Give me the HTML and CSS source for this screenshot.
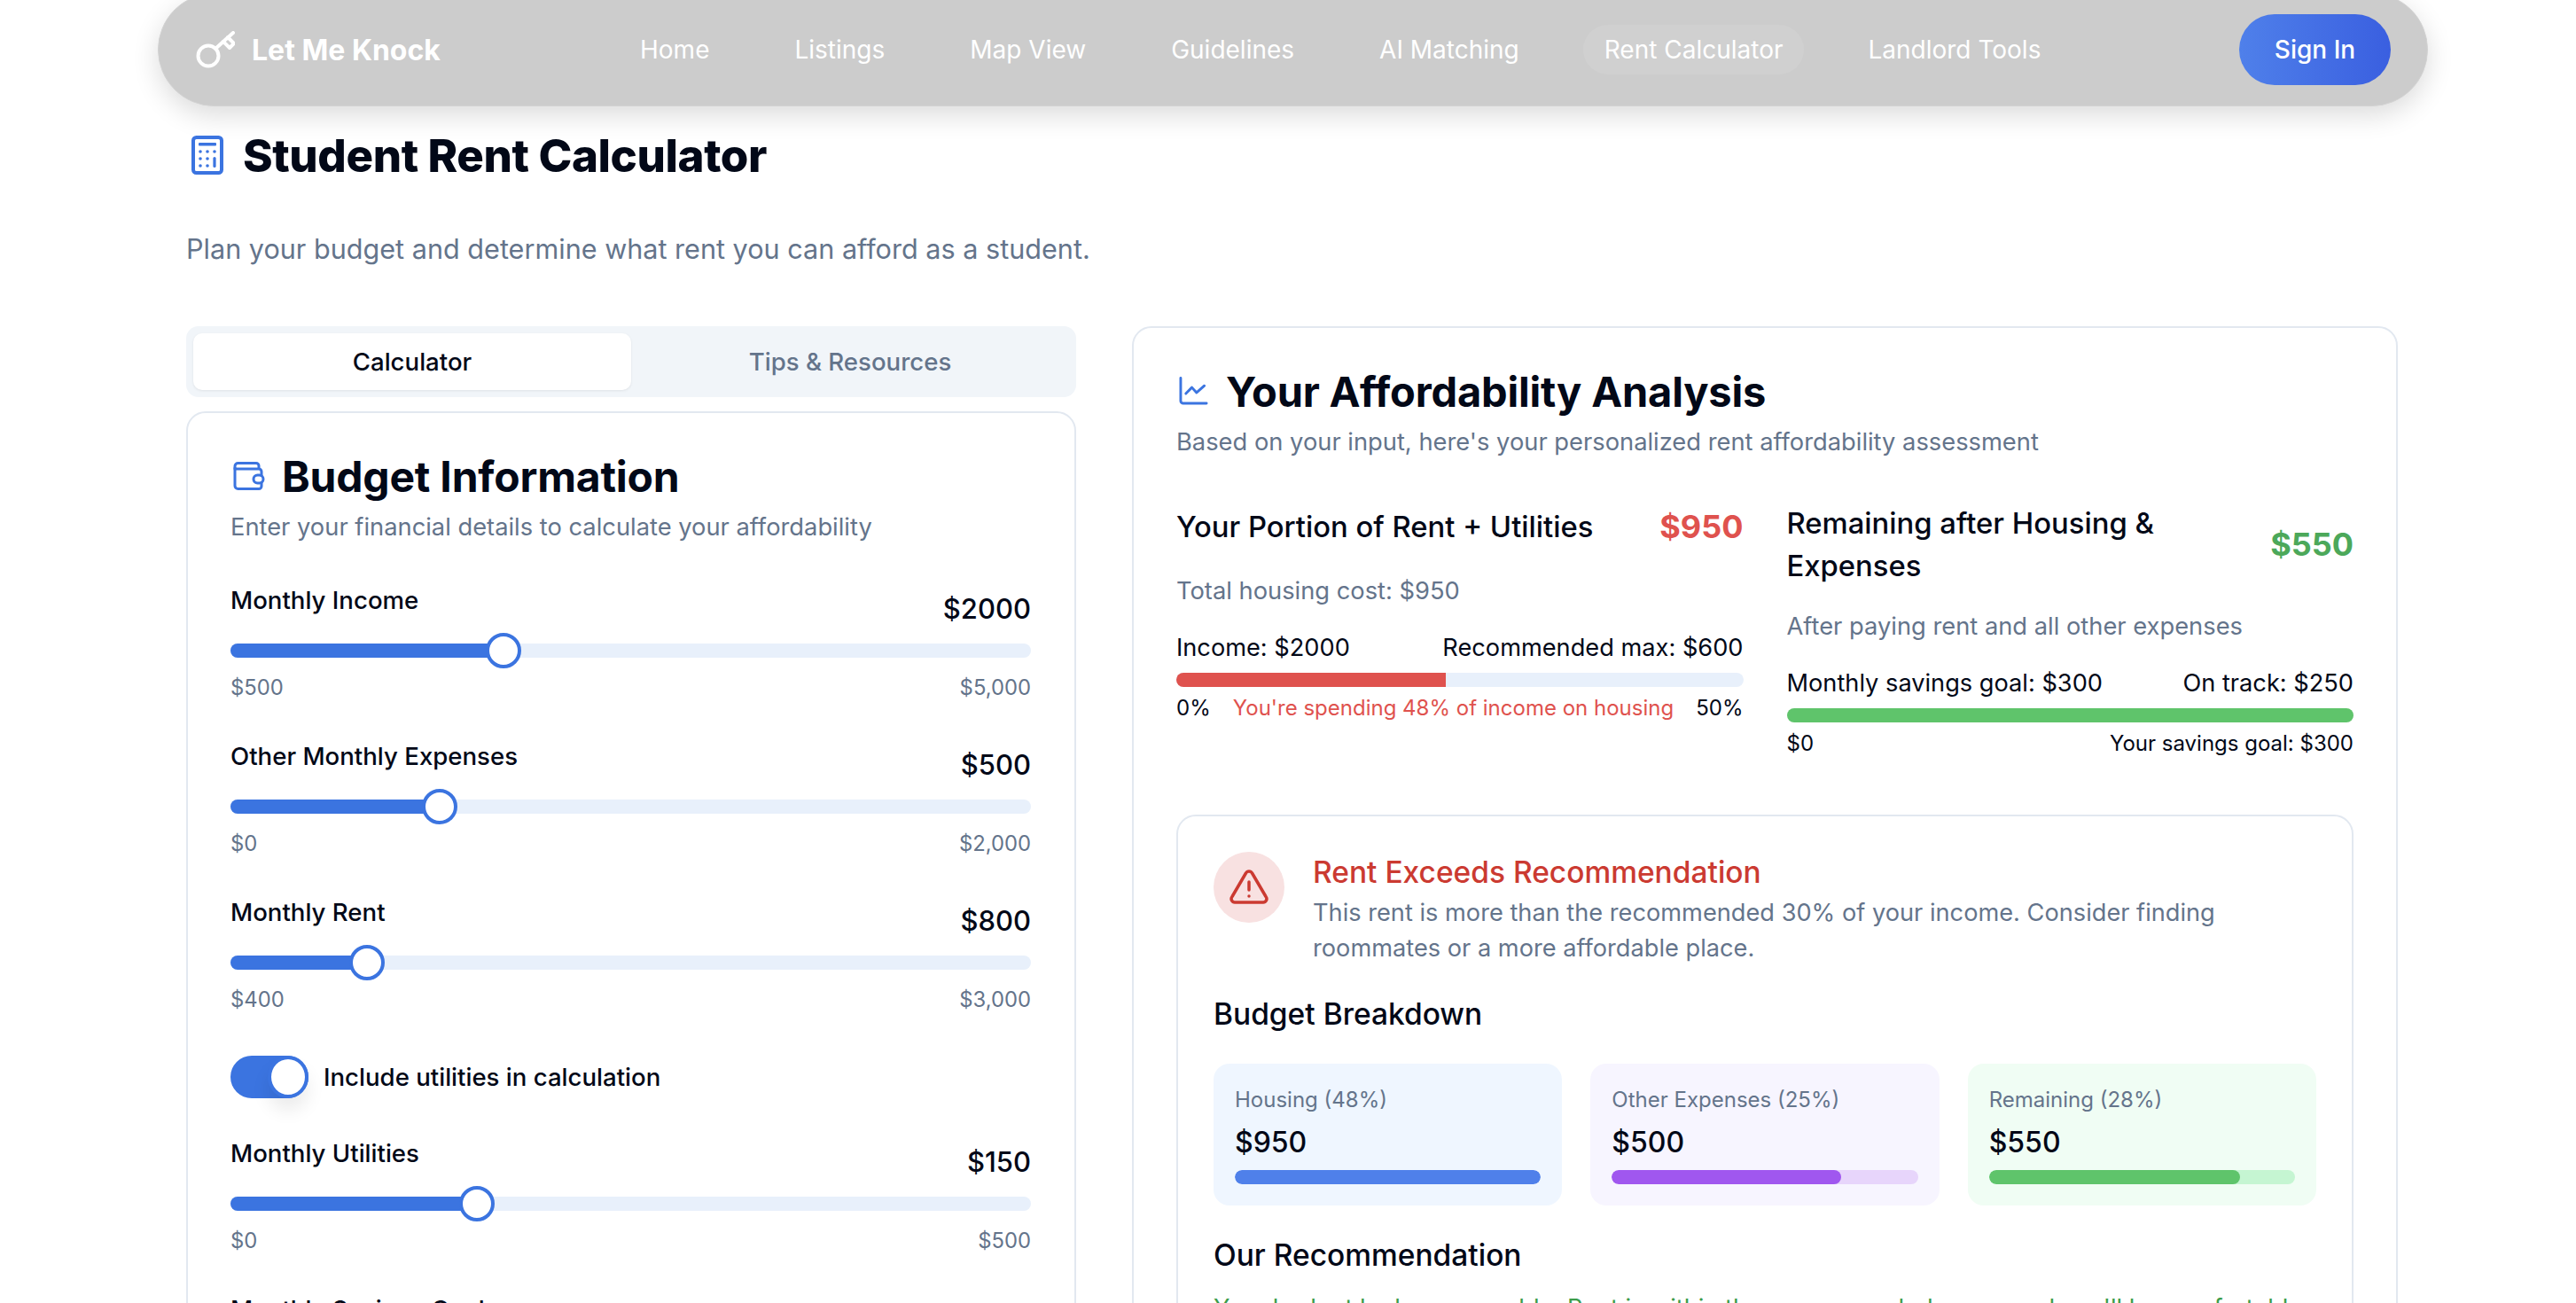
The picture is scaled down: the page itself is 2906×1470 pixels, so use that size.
FILE: index.html
```html
<!DOCTYPE html>
<html lang="en">
<head>
  <meta charset="UTF-8" />
  <title>Student Rent Calculator - Let Me Knock</title>
  <link rel="stylesheet" href="styles.css">
</head>
<body>
  <nav class="navbar">
    <div class="brand">
      <svg class="brand-icon" viewBox="0 0 44 42" fill="none" stroke="#fff" stroke-width="4" stroke-linecap="round" stroke-linejoin="round">
        <circle cx="14" cy="28" r="11.5" />
        <path d="M22 20 L42 2" />
        <path d="M31 12 L38 19 L43 14 L36 7" />
      </svg>
      <span>Let Me Knock</span>
    </div>
    <div class="nav-links">
      <a>Home</a>
      <a>Listings</a>
      <a>Map View</a>
      <a>Guidelines</a>
      <a>AI Matching</a>
      <a class="active">Rent Calculator</a>
      <a>Landlord Tools</a>
    </div>
    <button class="sign-in">Sign In</button>
  </nav>

  <main class="page">
    <h1 class="page-title">
      <svg class="title-icon" viewBox="0 0 36 44" fill="none">
        <rect x="2" y="2" width="32" height="40" rx="3.5" stroke="#3b74e0" stroke-width="4" />
        <rect x="8" y="8" width="20" height="3.5" rx="1" fill="#3b74e0" />
        <g fill="#3b74e0">
          <circle cx="10" cy="18" r="1.8" /><circle cx="18" cy="18" r="1.8" /><circle cx="26" cy="18" r="1.8" />
          <circle cx="10" cy="26" r="1.8" /><circle cx="18" cy="26" r="1.8" />
          <circle cx="10" cy="34" r="1.8" /><circle cx="18" cy="34" r="1.8" />
          <rect x="24.4" y="24" width="3.2" height="12" rx="1.6" />
        </g>
      </svg>
      Student Rent Calculator
    </h1>
    <p class="page-sub">Plan your budget and determine what rent you can afford as a student.</p>

    <div class="columns">
      <section class="left-col">
        <div class="tabs">
          <div class="tab active">Calculator</div>
          <div class="tab">Tips &amp; Resources</div>
        </div>

        <div class="card budget-card">
          <h2 class="card-title">
            <svg class="wallet-icon" viewBox="0 0 36 34" fill="none" stroke="#3b74e0" stroke-width="3" stroke-linejoin="round" stroke-linecap="round">
              <path d="M2 8 V28 A3.5 3.5 0 0 0 5.5 31.5 H29 A3 3 0 0 0 32 28.5 V25" />
              <path d="M32 16 V12 A3 3 0 0 0 29 9 H2 V6 A3.5 3.5 0 0 1 5.5 2.5 H26 A3 3 0 0 1 29 5.5 V9" />
              <rect x="23" y="16" width="11" height="9" rx="4.5" />
            </svg>
            Budget Information
          </h2>
          <p class="card-sub">Enter your financial details to calculate your affordability</p>

          <div class="field">
            <div class="field-head"><label>Monthly Income</label><span class="field-value">$2000</span></div>
            <div class="slider"><div class="slider-fill" style="width: 34.1%"></div><div class="slider-thumb"></div></div>
            <div class="field-range"><span>$500</span><span>$5,000</span></div>
          </div>

          <div class="field">
            <div class="field-head"><label>Other Monthly Expenses</label><span class="field-value">$500</span></div>
            <div class="slider"><div class="slider-fill" style="width: 26.1%"></div><div class="slider-thumb"></div></div>
            <div class="field-range"><span>$0</span><span>$2,000</span></div>
          </div>

          <div class="field">
            <div class="field-head"><label>Monthly Rent</label><span class="field-value">$800</span></div>
            <div class="slider"><div class="slider-fill" style="width: 17%"></div><div class="slider-thumb"></div></div>
            <div class="field-range"><span>$400</span><span>$3,000</span></div>
          </div>

          <div class="toggle-row">
            <div class="toggle"><div class="toggle-thumb"></div></div>
            <span>Include utilities in calculation</span>
          </div>

          <div class="field">
            <div class="field-head"><label>Monthly Utilities</label><span class="field-value">$150</span></div>
            <div class="slider"><div class="slider-fill" style="width: 30.8%"></div><div class="slider-thumb"></div></div>
            <div class="field-range"><span>$0</span><span>$500</span></div>
          </div>

          <div class="field">
            <div class="field-head"><label>Monthly Savings Goal</label><span class="field-value">$300</span></div>
          </div>
        </div>
      </section>

      <section class="card analysis-card">
        <h2 class="card-title">
          <svg class="chart-icon" viewBox="0 0 34 34" fill="none" stroke="#3b74e0" stroke-width="3" stroke-linecap="round" stroke-linejoin="round">
            <path d="M2 2 V28.5 A3 3 0 0 0 5 31.5 H32" />
            <path d="M8 20 L15 13 L20.5 19 L29.5 11" />
          </svg>
          Your Affordability Analysis
        </h2>
        <p class="card-sub">Based on your input, here's your personalized rent affordability assessment</p>

        <div class="stats">
          <div class="stat">
            <div class="stat-head">
              <h3>Your Portion of Rent + Utilities</h3>
              <span class="amount red">$950</span>
            </div>
            <p class="stat-note">Total housing cost: $950</p>
            <div class="bar-labels"><span>Income: $2000</span><span>Recommended max: $600</span></div>
            <div class="bar"><div class="bar-fill red-fill" style="width: 47.5%"></div></div>
            <div class="bar-foot"><span>0%</span><span class="warn">You're spending 48% of income on housing</span><span>50%</span></div>
          </div>

          <div class="stat">
            <div class="stat-head">
              <h3>Remaining after Housing &amp; Expenses</h3>
              <span class="amount green">$550</span>
            </div>
            <p class="stat-note">After paying rent and all other expenses</p>
            <div class="bar-labels"><span>Monthly savings goal: $300</span><span>On track: $250</span></div>
            <div class="bar"><div class="bar-fill green-fill" style="width: 100%"></div></div>
            <div class="bar-foot"><span>$0</span><span>Your savings goal: $300</span></div>
          </div>
        </div>

        <div class="card result-card">
          <div class="alert">
            <div class="alert-icon">
              <svg viewBox="0 0 44 40" fill="none" stroke="#cb3a31" stroke-width="3.5" stroke-linecap="round" stroke-linejoin="round">
                <path d="M18.5 4 A4 4 0 0 1 25.5 4 L41 30.5 A4 4 0 0 1 37.5 37 H6.5 A4 4 0 0 1 3 30.5 Z" />
                <path d="M22 14 V23" />
                <path d="M22 30 V30.1" />
              </svg>
            </div>
            <div class="alert-body">
              <h4>Rent Exceeds Recommendation</h4>
              <p>This rent is more than the recommended 30% of your income. Consider finding roommates or a more affordable place.</p>
            </div>
          </div>

          <h3 class="section-title">Budget Breakdown</h3>
          <div class="breakdown">
            <div class="tile tile-blue">
              <div class="tile-label">Housing (48%)</div>
              <div class="tile-value">$950</div>
              <div class="tile-bar"><div class="tile-fill" style="width: 100%"></div></div>
            </div>
            <div class="tile tile-purple">
              <div class="tile-label">Other Expenses (25%)</div>
              <div class="tile-value">$500</div>
              <div class="tile-bar"><div class="tile-fill" style="width: 75%"></div></div>
            </div>
            <div class="tile tile-green">
              <div class="tile-label">Remaining (28%)</div>
              <div class="tile-value">$550</div>
              <div class="tile-bar"><div class="tile-fill" style="width: 82%"></div></div>
            </div>
          </div>

          <h3 class="section-title rec-title">Our Recommendation</h3>
          <p class="rec-text">Your budget looks reasonable. Rent is within the recommended range and you'll be comfortable.</p>
        </div>
      </section>
    </div>
  </main>
</body>
</html>
```

FILE: styles.css
```css
* {
  box-sizing: border-box;
}

html, body {
  height: 1470px;
  overflow: hidden;
}

body {
  margin: 0;
  background: #fff;
  color: #020817;
  font-family: Inter, "Liberation Sans", sans-serif;
}

h1, h2, h3, h4, p {
  margin: 0;
}

/* nav */
.navbar {
  display: flex;
  align-items: center;
  height: 128px;
  margin: -8px 167px 0 178px;
  padding: 0 41px 0 42px;
  background: #ccc;
  border: 1px solid #d2d2d2;
  border-radius: 64px;
  box-shadow: 0 10px 30px rgba(0, 0, 0, 0.14);
  color: #fff;
}

.brand {
  display: flex;
  align-items: center;
  gap: 19px;
  width: 477px;
  font-size: 32px;
  font-weight: 700;
}

.brand-icon {
  width: 44px;
  height: 42px;
}

.nav-links {
  display: flex;
  gap: 48px;
  flex: 1;
  font-size: 28px;
  font-weight: 400;
}

.nav-links a {
  height: 56px;
  line-height: 56px;
  padding: 0 24px;
}

.nav-links a.active {
  background: #d0d0d0;
  border-radius: 28px;
}

.sign-in {
  width: 171px;
  height: 80px;
  border: none;
  border-radius: 40px;
  background: linear-gradient(90deg, #4f80ea, #3a5fe0);
  color: #fff;
  font: 500 28px Inter, sans-serif;
}

/* page */
.page {
  padding: 32px 201px 0 210px;
}

.page-title {
  display: flex;
  align-items: center;
  gap: 22px;
  height: 46px;
  font-size: 51px;
  font-weight: 800;
  letter-spacing: -0.4px;
  padding-left: 6px;
}

.title-icon {
  width: 36px;
  height: 44px;
}

.page-sub {
  margin-top: 63px;
  font-size: 30.6px;
  line-height: 40px;
  color: #64748b;
}

.columns {
  display: grid;
  grid-template-columns: 1004px 1428px;
  gap: 63px;
  margin-top: 67px;
}

.card {
  background: #fff;
  border: 2px solid #e2e8f0;
  border-radius: 22px;
}

/* tabs */
.tabs {
  display: grid;
  grid-template-columns: 1fr 1fr;
  height: 80px;
  padding: 8px;
  background: #f1f5f9;
  border-radius: 14px;
}

.tab {
  display: flex;
  align-items: center;
  justify-content: center;
  font-size: 27.6px;
  font-weight: 500;
  color: #64748b;
  border-radius: 10px;
}

.tab.active {
  background: #fff;
  color: #020817;
  box-shadow: 0 1px 3px rgba(0, 0, 0, 0.08);
}

.budget-card {
  margin-top: 16px;
  padding: 41px 49px 41px 48px;
  height: 1100px;
}

.card-title {
  display: flex;
  align-items: center;
  gap: 20px;
  height: 60px;
  font-size: 47px;
  font-weight: 700;
  letter-spacing: -0.2px;
}

.budget-card .card-title {
  gap: 19px;
  font-size: 48px;
}

.wallet-icon {
  width: 36px;
  height: 34px;
  margin-left: 3px;
}

.chart-icon {
  width: 33px;
  height: 34px;
  margin-left: 3px;
}

.card-sub {
  margin-top: 10px;
  font-size: 27.3px;
  line-height: 36px;
  color: #64748b;
}

/* sliders */
.field {
  height: 176px;
}

.budget-card .field:first-of-type {
  margin-top: 44px;
}

.field-head {
  display: flex;
  justify-content: space-between;
  height: 69px;
}

.field-head label {
  font-size: 27.6px;
  line-height: 40px;
  font-weight: 500;
}

.field-value {
  font-size: 31px;
  font-weight: 500;
  line-height: 40px;
  padding-top: 10px;
}

.slider {
  position: relative;
  display: flex;
  align-items: center;
  height: 16px;
  background: #e8f0fb;
  border-radius: 8px;
}

.slider-fill {
  height: 16px;
  background: #3b74e0;
  border-radius: 8px 0 0 8px;
}

.slider-thumb {
  flex: none;
  width: 40px;
  height: 40px;
  margin-left: -20px;
  background: #fff;
  border: 4px solid #3b74e0;
  border-radius: 50%;
}

.field-range {
  display: flex;
  justify-content: space-between;
  margin-top: 19px;
  font-size: 23.8px;
  line-height: 30px;
  color: #64748b;
}

.toggle-row {
  display: flex;
  align-items: center;
  gap: 17px;
  height: 48px;
  margin-top: 6px;
  margin-bottom: 42px;
  font-size: 27.6px;
  font-weight: 500;
}

.toggle {
  display: flex;
  justify-content: flex-end;
  align-items: center;
  width: 88px;
  height: 48px;
  background: #3b74e0;
  border-radius: 24px;
}

.toggle-thumb {
  width: 46px;
  height: 48px;
  background: #fff;
  border: 4px solid #3b74e0;
  border-radius: 50%;
  box-shadow: 0 14px 20px rgba(0, 0, 0, 0.08);
}

/* analysis */
.analysis-card {
  height: 1200px;
  padding: 41px 48px;
}

.stats {
  display: grid;
  grid-template-columns: 1fr 1fr;
  gap: 49px;
  margin-top: 49px;
}

.stat-head {
  display: flex;
  justify-content: space-between;
  align-items: center;
  gap: 60px;
  min-height: 56px;
}

.stat-head h3 {
  font-size: 32.8px;
  line-height: 48px;
  font-weight: 500;
}

.amount {
  font-size: 36px;
  line-height: 54px;
  font-weight: 700;
}

.red {
  color: #df524e;
}

.green {
  color: #4ca85a;
}

.stat-note {
  margin-top: 27px;
  font-size: 27.3px;
  line-height: 36px;
  color: #64748b;
}

.bar-labels {
  display: flex;
  justify-content: space-between;
  margin-top: 28px;
  font-size: 27.2px;
  line-height: 36px;
}

.bar {
  height: 16px;
  margin-top: 10px;
  background: #e8f0fb;
  border-radius: 8px;
  overflow: hidden;
}

.bar-fill {
  height: 100%;
}

.red-fill {
  background: #df524e;
}

.green-fill {
  background: #5fc46b;
}

.bar-foot {
  display: flex;
  justify-content: space-between;
  margin-top: 9px;
  font-size: 24px;
  line-height: 30px;
}

.warn {
  color: #df524e;
}

/* result */
.result-card {
  height: 800px;
  margin-top: 65px;
  padding: 40px;
}

.alert {
  display: flex;
  gap: 32px;
}

.alert-icon {
  display: flex;
  align-items: center;
  justify-content: center;
  flex: none;
  width: 80px;
  height: 80px;
  background: #f8e1e1;
  border-radius: 50%;
}

.alert-icon svg {
  width: 44px;
  height: 40px;
}

.alert-body h4 {
  font-size: 33.5px;
  line-height: 46px;
  font-weight: 500;
  color: #cb3a31;
}

.alert-body p {
  margin-top: 3px;
  font-size: 27.2px;
  line-height: 40px;
  color: #64748b;
}

.section-title {
  margin-top: 32px;
  font-size: 33.5px;
  line-height: 44px;
  font-weight: 500;
}

.breakdown {
  display: grid;
  grid-template-columns: repeat(3, 1fr);
  gap: 32px;
  margin-top: 34px;
}

.tile {
  height: 160px;
  padding: 24px;
  border-radius: 18px;
}

.tile-label {
  font-size: 24px;
  line-height: 34px;
  color: #64748b;
}

.tile-value {
  margin-top: 11px;
  font-size: 32px;
  line-height: 40px;
  font-weight: 500;
}

.tile-bar {
  height: 16px;
  margin-top: 11px;
  border-radius: 8px;
  overflow: hidden;
}

.tile-fill {
  height: 100%;
  border-radius: 8px;
}

.tile-blue {
  background: #eff6ff;
}

.tile-blue .tile-fill {
  background: #4f80ea;
}

.tile-purple {
  background: #f7f5ff;
}

.tile-purple .tile-bar {
  background: #e7d5fb;
}

.tile-purple .tile-fill {
  background: #a057ef;
}

.tile-green {
  background: #f0fdf4;
}

.tile-green .tile-bar {
  background: #c5f5d2;
}

.tile-green .tile-fill {
  background: #5fc46b;
}

.rec-title {
  margin-top: 34px;
}

.rec-text {
  margin-top: 18px;
  font-size: 27.2px;
  line-height: 40px;
  color: #3c9c4a;
  white-space: nowrap;
}
```
